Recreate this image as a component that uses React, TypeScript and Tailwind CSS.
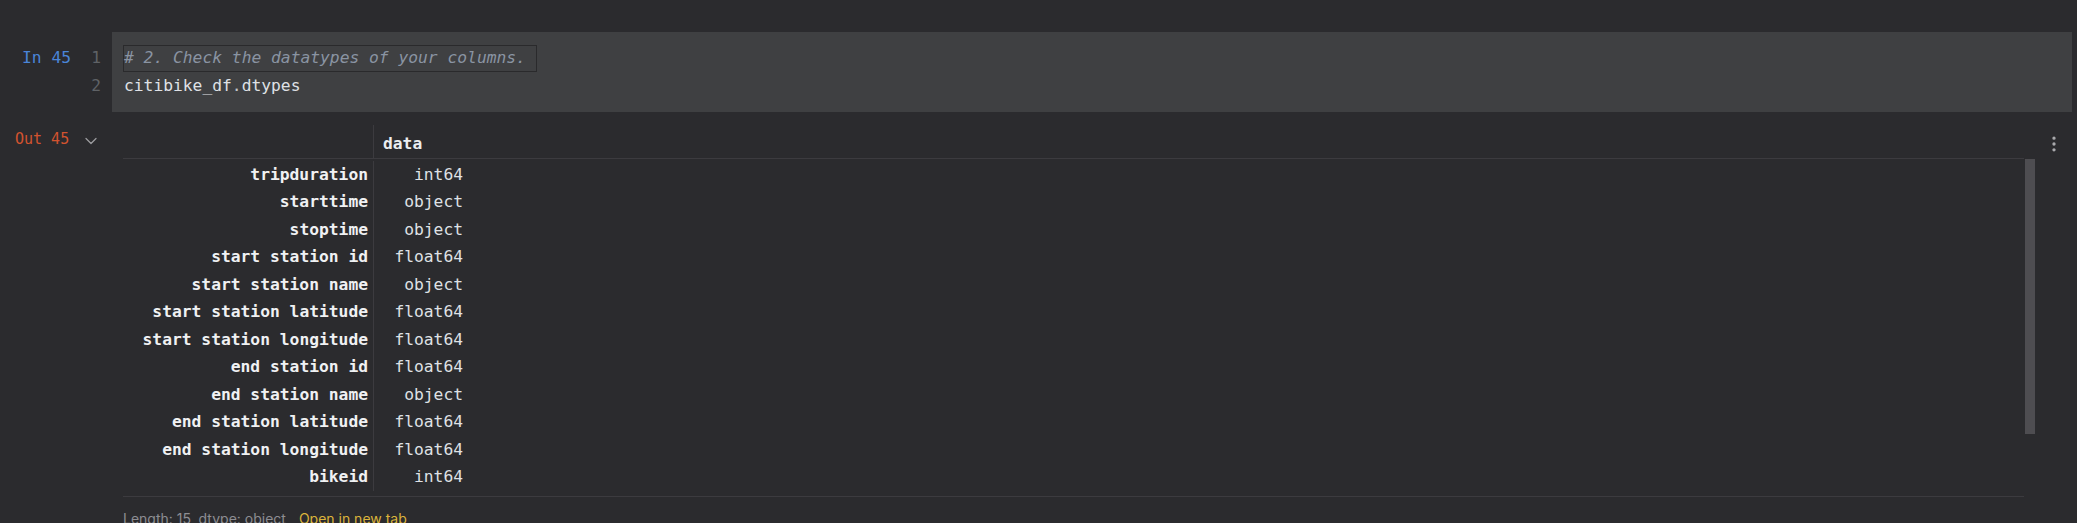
import { ChevronDown, EllipsisVertical } from "lucide-react";

const mono = "font-['DejaVu_Sans_Mono','Liberation_Mono',monospace]";

const rows: [string, string][] = [
    ["tripduration", "int64"],
    ["starttime", "object"],
    ["stoptime", "object"],
    ["start station id", "float64"],
    ["start station name", "object"],
    ["start station latitude", "float64"],
    ["start station longitude", "float64"],
    ["end station id", "float64"],
    ["end station name", "object"],
    ["end station latitude", "float64"],
    ["end station longitude", "float64"],
    ["bikeid", "int64"],
];

export default function App() {
    return (
        <div className={`h-[523px] w-full overflow-hidden bg-[#2b2b2e] pt-[32px] ${mono}`}>
            {/* input cell */}
            <div className="flex">
                <div className="flex w-[112px] shrink-0 pt-[13px] text-[16.3px]">
                    <div className="w-[75px] pl-[22px] h-[27px] flex items-center whitespace-nowrap text-[#4a85d8]">In 45</div>
                    <div className="w-[26px] text-right text-[#5f6266]">
                        <div className="h-[27px] flex items-center justify-end">1</div>
                        <div className="h-[28px] flex items-center justify-end">2</div>
                    </div>
                </div>
                <div className="flex-1 mr-[5px] bg-[#3f4042] pl-[11px] pt-[13px] pb-[12px] text-[16.3px]">
                    <div className="h-[27px] flex">
                        <span className="h-full flex items-center border border-[#2a2a2c] pr-[10px] italic text-[#8a94a2] whitespace-nowrap">
                            # 2. Check the datatypes of your columns.
                        </span>
                    </div>
                    <div className="h-[28px] flex items-center pl-[1px] text-[#dfe1e5]">
                        citibike_df<span className="text-[#c4c6cb]">.</span>dtypes
                    </div>
                </div>
            </div>

            {/* output */}
            <div className="flex mt-[13px]">
                <div className="w-[123px] shrink-0 pl-[15px] pt-[4px] flex items-start text-[15px] text-[#d2532f]">
                    <span className="h-[20px] flex items-center whitespace-nowrap">Out 45</span>
                    <ChevronDown size={20} strokeWidth={1.5} className="ml-[12px] mt-[2px] text-[#9c9c9f]" />
                </div>

                <div className="flex-1 flex flex-col">
                    <div className="mr-[11px] h-[34px] flex border-b border-[#3c3b3f]">
                        <div className="w-[251px] border-r border-[#3c3b3f]" />
                        <div className="pl-[9px] pt-[5px] flex items-center text-[16.3px] font-bold text-[#eceef0]">data</div>
                    </div>
                    <div className="flex">
                        <div className="flex-1 h-[338px] pt-[2px] overflow-hidden border-b border-[#3c3b3f]">
                            {rows.map(([name, type]) => (
                                <div key={name} className="flex h-[27.5px] text-[16.3px]">
                                    <div className="w-[251px] border-r border-[#3c3b3f] pr-[5px] flex items-center justify-end font-bold text-[#f0f1f3] whitespace-nowrap">
                                        {name}
                                    </div>
                                    <div className="w-[94px] pr-[5px] flex items-center justify-end text-[#dfe1e5]">{type}</div>
                                </div>
                            ))}
                        </div>
                        <div className="w-[11px] pl-[1px]">
                            <div className="w-[10px] h-[275px] bg-[#4e4d51]" />
                        </div>
                    </div>
                    <div className="pt-[13px] flex gap-[13px] font-['Inter','Noto_Sans',sans-serif] text-[14px] leading-[17px]">
                        <span className="text-[#8d8d92]">Length: 15, dtype: object</span>
                        <span className="text-[#dbb43b]">Open in new tab</span>
                    </div>
                </div>

                <div className="w-[42px] shrink-0 pl-[9px] pt-[9px]">
                    <EllipsisVertical size={20} strokeWidth={2} className="text-[#a9a9ac]" />
                </div>
            </div>
        </div>
    );
}
